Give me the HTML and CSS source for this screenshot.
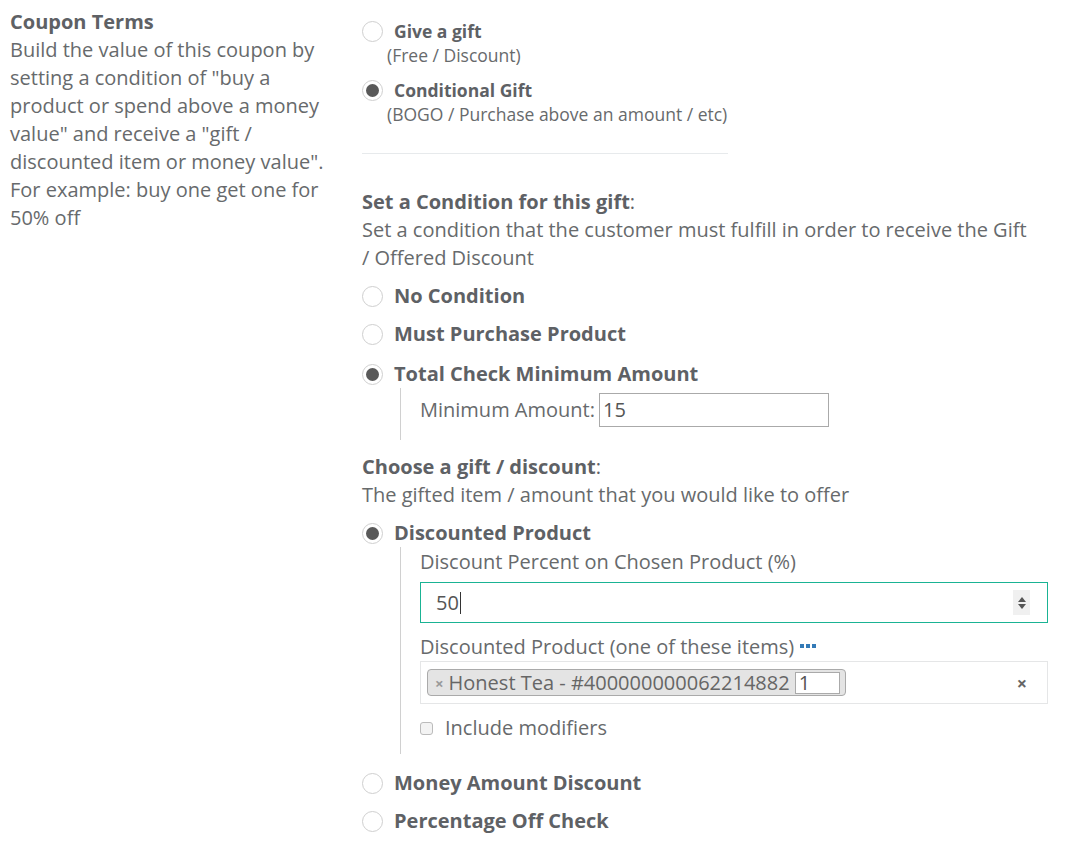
FILE: index.html
```html
<!DOCTYPE html>
<html>
<head>
<meta charset="utf-8">
<link rel="stylesheet" href="styles.css">
</head>
<body>
<div class="page">
  <div class="side">
    <div class="side-title">Coupon Terms</div>
    <div class="side-text">Build the value of this coupon by setting a condition of "buy a product or spend above a money value" and receive a "gift / discounted item or money value". For example: buy one get one for 50% off</div>
  </div>
  <div class="main">
    <div class="type-opt">
      <div class="radio-row"><span class="radio"></span><span class="radio-label">Give a gift</span></div>
      <div class="type-sub">(Free / Discount)</div>
    </div>
    <div class="type-opt">
      <div class="radio-row"><span class="radio checked"></span><span class="radio-label">Conditional Gift</span></div>
      <div class="type-sub">(BOGO / Purchase above an amount / etc)</div>
    </div>
    <hr class="sep">

    <div class="section section-cond">
      <div class="sec-title"><b>Set a Condition for this gift</b>:</div>
      <div class="sec-desc">Set a condition that the customer must fulfill in order to receive the Gift / Offered Discount</div>
      <div class="radio-row opt"><span class="radio"></span><span class="radio-label">No Condition</span></div>
      <div class="radio-row opt"><span class="radio"></span><span class="radio-label">Must Purchase Product</span></div>
      <div class="radio-row opt opt-total"><span class="radio checked"></span><span class="radio-label">Total Check Minimum Amount</span></div>
      <div class="nested nested-min">
        <label class="inline-field">Minimum Amount:<span class="text-input small-input">15</span></label>
      </div>
    </div>

    <div class="section section-gift">
      <div class="sec-title"><b>Choose a gift / discount</b>:</div>
      <div class="sec-desc">The gifted item / amount that you would like to offer</div>
      <div class="radio-row opt opt-disc"><span class="radio checked"></span><span class="radio-label">Discounted Product</span></div>
      <div class="nested nested-gift">
        <div class="field-label">Discount Percent on Chosen Product (%)</div>
        <div class="num-input"><span class="num-value">50</span><span class="caret"></span>
          <span class="spinner"><svg width="10" height="16" viewBox="0 0 10 16"><path d="M5 2 L9 7 L1 7 Z" fill="#555"/><path d="M1 9 L9 9 L5 14 Z" fill="#555"/></svg></span>
        </div>
        <div class="field-label label-products">Discounted Product (one of these items) <span class="dots"><i></i><i></i><i></i></span></div>
        <div class="select-box">
          <span class="chip"><span class="chip-x">×</span>Honest Tea - #400000000062214882 <span class="chip-qty">1</span></span>
          <span class="clear-x">×</span>
        </div>
        <div class="check-row"><span class="checkbox"></span><span>Include modifiers</span></div>
      </div>
      <div class="radio-row opt opt-after"><span class="radio"></span><span class="radio-label">Money Amount Discount</span></div>
      <div class="radio-row opt"><span class="radio"></span><span class="radio-label">Percentage Off Check</span></div>
    </div>
  </div>
</div>
</body>
</html>
```

FILE: styles.css
```css
* { box-sizing: border-box; }
html, body { margin: 0; padding: 0; background: #fff; }
body {
  font-family: "Open Sans", "Liberation Sans", sans-serif;
  color: #676a6c;
  font-size: 20px;
  line-height: 28px;
}
.page {
  display: flex;
  padding: 8px 0 0 10px;
}
.side {
  width: 340px;
  flex: none;
  padding-right: 8px;
}
.side-title { font-weight: 700; color: #5e6165; }
.main {
  flex: none;
  width: 690px;
  margin-left: 12px;
  padding-top: 9px;
}
.radio-row {
  display: flex;
  align-items: center;
  height: 28px;
}
.radio {
  width: 21px;
  height: 21px;
  border-radius: 50%;
  border: 1px solid #cfcfcf;
  background: #fff;
  flex: none;
  position: relative;
  margin-right: 11px;
}
.radio.checked::after {
  content: "";
  position: absolute;
  left: 3px; top: 3px;
  width: 13px; height: 13px;
  border-radius: 50%;
  background: #595959;
}
.radio-label { font-weight: 700; color: #5e6165; white-space: nowrap; }
.type-opt .radio-label { font-size: 17.5px; }
.type-sub { font-size: 17.5px; padding-left: 25px; line-height: 24px; margin-top: -2px; }
.type-opt + .type-opt { margin-top: 9px; }
.sep {
  width: 366px;
  margin: 27px 0 0 0;
  border: 0;
  border-top: 1px solid #e7eaec;
}
.section-cond { margin-top: 34px; }
.sec-title { color: #5e6165; }
.sec-desc { max-width: 670px; }
.opt { margin-top: 10px; }
.opt.opt-total { margin-top: 12px; }
.nested {
  margin-left: 38px;
  border-left: 1px solid #d0d0d0;
  padding-left: 19px;
}
.nested-min { padding-top: 5px; padding-bottom: 13px; }
.inline-field { display: flex; align-items: center; }
.text-input {
  display: inline-flex;
  align-items: center;
  border: 1px solid #aaa;
  height: 34px;
  padding: 0 3px;
  margin-left: 4px;
  color: #555;
}
.small-input { width: 230px; }
.section-gift { margin-top: 13px; }
.opt.opt-disc { margin-top: 10px; }
.nested-gift { padding-top: 1px; padding-bottom: 12px; }
.num-input {
  margin-top: 6px;
  height: 41px;
  width: 628px;
  border: 1px solid #1ab394;
  display: flex;
  align-items: center;
  padding-left: 15px;
  position: relative;
  color: #555;
}
.caret { width: 1px; height: 22px; background: #333; margin-left: 1px; }
.spinner {
  position: absolute;
  right: 17px; top: 7px;
  width: 17px; height: 25px;
  background: #f0f0f0;
  display: flex; align-items: center; justify-content: center;
}
.label-products { margin-top: 10px; }
.dots { display: inline-flex; gap: 2px; vertical-align: middle; margin-left: 1px; position: relative; top: -3px; }
.dots i { width: 4px; height: 4px; background: #337ab7; display: block; }
.select-box {
  margin-top: 0;
  height: 43px;
  width: 628px;
  border: 1px solid #e5e6e7;
  display: flex;
  align-items: center;
  padding-left: 6px;
  position: relative;
}
.chip {
  display: inline-flex;
  align-items: center;
  height: 27px;
  background: #e4e4e4;
  border: 1px solid #aaa;
  border-radius: 4px;
  padding: 0 5px 0 7px;
  color: #666;
  white-space: pre;
}
.chip-x { color: #999; font-weight: 700; font-size: 15px; margin-right: 5px; }
.chip-qty {
  display: inline-block;
  width: 45px;
  height: 22px;
  line-height: 20px;
  border: 1px solid #aaa;
  background: #fff;
  padding-left: 3px;
  color: #555;
}
.clear-x {
  position: absolute;
  right: 20px;
  top: 7px;
  font-weight: 700;
  color: #666;
  font-size: 18px;
}
.check-row { display: flex; align-items: center; margin-top: 10px; }
.checkbox {
  width: 13px; height: 13px;
  border: 1px solid #bbb;
  border-radius: 3px;
  background: #f3f3f3;
  margin-right: 12px;
}
.opt.opt-after { margin-top: 15px; }
```
